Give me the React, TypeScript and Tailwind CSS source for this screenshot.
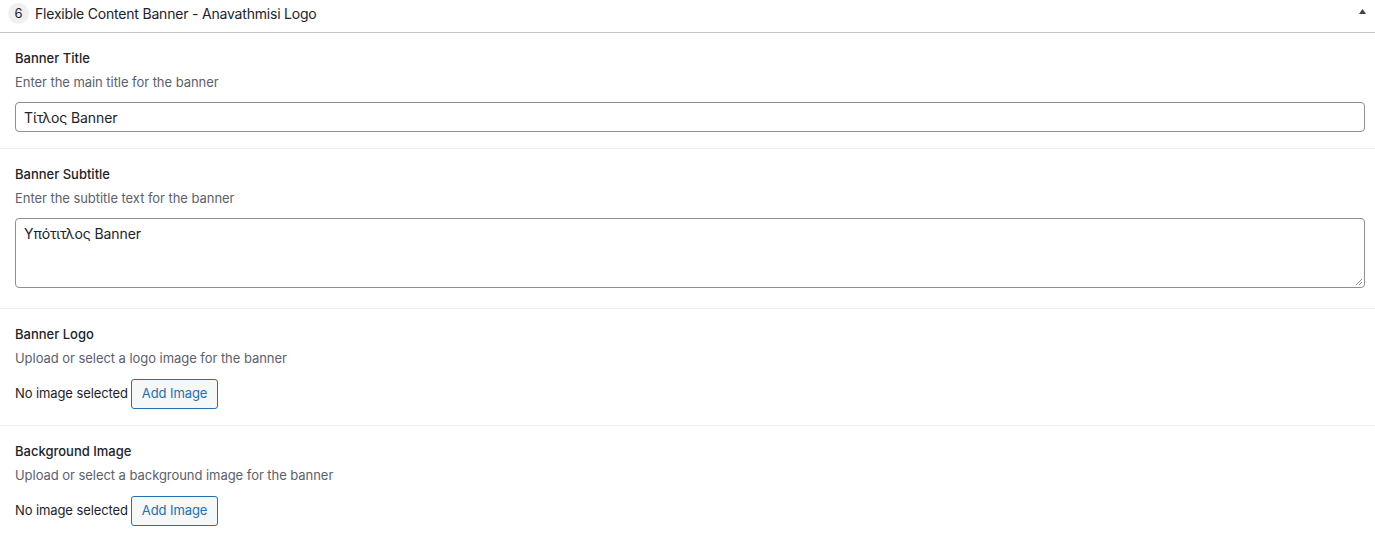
import React from "react";

function Field({
  label,
  desc,
  children,
  last,
}: {
  label: string;
  desc: string;
  children: React.ReactNode;
  last?: boolean;
}) {
  return (
    <div className={`px-[15px] pt-[15px] ${last ? "pb-[12px]" : "pb-[16px] border-b border-[#eeeeee]"}`}>
      <div className="text-[13px] leading-[20px] font-[450] text-[#1d2327]">{label}</div>
      <div className="mt-[4px] text-[13px] leading-[20px] text-[#5b616b] tracking-[-0.05px]">{desc}</div>
      <div className="mt-[10px]">{children}</div>
    </div>
  );
}

function ImagePicker() {
  return (
    <div className="flex items-center pt-[1px]">
      <span className="text-[13px] text-[#1d2327] tracking-[-0.1px]">No image selected</span>
      <button className="ml-[3px] h-[30px] px-[10px] rounded-[3px] border border-[#2271b1] bg-[#f6f7f7] text-[13px] text-[#2271b1] tracking-[-0.1px]">
        Add Image
      </button>
    </div>
  );
}

export default function App() {
  return (
    <div
      className="w-[1375px] h-[538px] bg-white overflow-hidden"
      style={{ fontFamily: "Inter, 'Noto Sans', sans-serif" }}
    >
      <div className="h-[33px] border-b border-[#c3c4c7] flex items-start relative">
        <div className="mt-[3px] ml-[8px] w-[21px] h-[21px] rounded-full bg-[#f0f0f1] flex items-center justify-center text-[13px] text-[#1d2327]">
          6
        </div>
        <div className="ml-[6px] mt-[3px] text-[14px] leading-[21px] text-[#1d2327] tracking-[-0.2px]">
          Flexible Content Banner - Anavathmisi Logo
        </div>
        <svg className="absolute right-[9px] top-[9px]" width="7" height="5" viewBox="0 0 7 5">
          <path d="M3.5 0 L7 5 L0 5 Z" fill="#3c434a" />
        </svg>
      </div>

      <Field label="Banner Title" desc="Enter the main title for the banner">
        <div className="h-[30px] w-[1350px] rounded-[4px] border border-[#8c8f94] flex items-center px-[8px] text-[14px] text-[#1d2327] tracking-[-0.1px]">
          Τίτλος Banner
        </div>
      </Field>

      <Field label="Banner Subtitle" desc="Enter the subtitle text for the banner">
        <div className="relative mt-[1px] h-[70px] w-[1350px] rounded-[4px] border border-[#8c8f94] px-[8px] pt-[5px] text-[14px] leading-[20px] text-[#1d2327] tracking-[-0.1px] mb-[4px]">
          Υπότιτλος Banner
          <svg className="absolute right-[1px] bottom-[1px]" width="9" height="9" viewBox="0 0 9 9">
            <path d="M8 2 L2 8 M8 5 L5 8" stroke="#8c8f94" strokeWidth="1" />
          </svg>
        </div>
      </Field>

      <Field label="Banner Logo" desc="Upload or select a logo image for the banner">
        <ImagePicker />
      </Field>

      <Field label="Background Image" desc="Upload or select a background image for the banner" last>
        <ImagePicker />
      </Field>
    </div>
  );
}
